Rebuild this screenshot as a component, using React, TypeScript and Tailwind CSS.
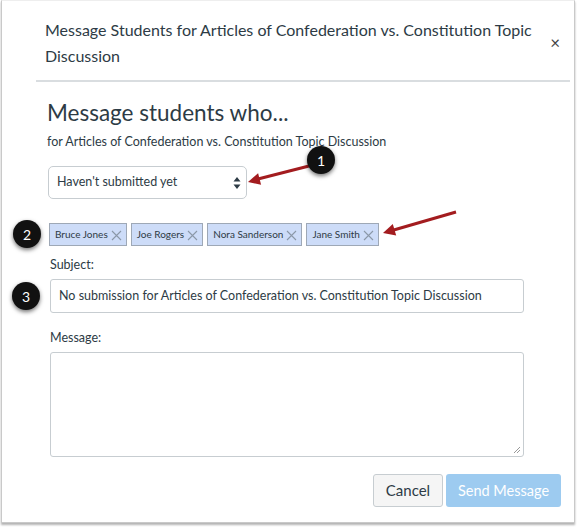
import { ReactNode } from 'react';

const recipients = ['Bruce Jones', 'Joe Rogers', 'Nora Sanderson', 'Jane Smith'];

function Callout({ n, className }: { n: number; className: string }) {
  return (
    <div
      className={`absolute flex h-[28px] w-[28px] items-center justify-center rounded-full bg-[#111] text-[14px] text-white shadow-[0_2px_4px_rgba(0,0,0,0.55)] ${className}`}>
      {n}
    </div>
  );
}

function Label({ children }: { children: ReactNode }) {
  return <div className="ml-[3px] text-[12.5px] leading-[18px] text-[#2d3b45]">{children}</div>;
}

function RecipientTag({ name }: { name: string }) {
  return (
    <div className="flex h-[23px] items-center gap-[3px] border border-[#9ea8b6] bg-[#cddcf8] pl-[5px] pr-[4px] text-[10px] text-[#2d3b45]">
      <span>{name}</span>
      <svg width="11" height="11" viewBox="0 0 11 11" className="mt-[1px]">
        <path d="M1 1 L10 10 M10 1 L1 10" stroke="#8b98a8" strokeWidth="1.1" fill="none" />
      </svg>
    </div>
  );
}

export default function App() {
  return (
    <div className="relative h-[527px] w-[577px] bg-white font-['Lato','Open_Sans',sans-serif]">
      <div className="ml-[1px] h-[523px] w-[574px] border-x border-b border-t border-[#c9c9c9] border-t-[#eeeeee] bg-white shadow-[0_2px_2px_rgba(0,0,0,0.3)]">
        {/* dialog header */}
        <div className="ml-[34px] mr-[4px] flex items-center border-b-2 border-[#d9dde0] pb-[11px] pt-[16px]">
          <h1 className="w-[500px] pl-[9px] text-[16px] leading-[26px] text-[#2d3b45]">
            Message Students for Articles of Confederation vs. Constitution Topic Discussion
          </h1>
          <span className="ml-auto mr-[10px] mt-[-2px] text-[17px] leading-none text-[#444]">×</span>
        </div>

        {/* dialog body */}
        <div className="w-[559px] pl-[45px]">
          <h2 className="mt-[16px] text-[22.5px] leading-[30px] text-[#2d3b45]">Message students who...</h2>
          <p className="mt-[5px] text-[12.5px] leading-[18px] text-[#2d3b45]">
            for Articles of Confederation vs. Constitution Topic Discussion
          </p>

          <div className="ml-[1px] mt-[15px] flex h-[33px] w-[199px] items-center justify-between rounded-[5px] border border-[#c7cdd1] pl-[8px] pr-[5px] text-[12.5px] text-[#2d3b45]">
            <span>Haven't submitted yet</span>
            <svg width="8" height="14" viewBox="0 0 8 14">
              <path d="M4 1 L7.5 5.5 L0.5 5.5 Z M4 13 L7.5 8.5 L0.5 8.5 Z" fill="#2d3b45" />
            </svg>
          </div>

          <div className="ml-[2px] mt-[24px] flex gap-[4px]">
            {recipients.map((name) => (
              <RecipientTag key={name} name={name} />
            ))}
          </div>

          <div className="mt-[10px]">
            <Label>Subject:</Label>
          </div>
          <div className="ml-[3px] mt-[5px] flex h-[34px] w-[474px] items-center rounded-[3px] border border-[#c7cdd1] px-[8px] text-[12.5px] text-[#2d3b45]">
            No submission for Articles of Confederation vs. Constitution Topic Discussion
          </div>

          <div className="mt-[16px]">
            <Label>Message:</Label>
          </div>
          <div className="relative ml-[3px] mt-[5px] h-[105px] w-[474px] rounded-[3px] border border-[#c7cdd1]">
            <svg width="8" height="8" viewBox="0 0 8 8" className="absolute bottom-[2px] right-[2px]">
              <path d="M7 1 L1 7 M7 4 L4 7" stroke="#999" strokeWidth="1" />
            </svg>
          </div>

          <div className="mt-[17px] flex justify-end gap-[3px]">
            <button className="h-[33px] w-[70px] rounded-[3px] border border-[#c7cdd1] bg-[#f5f5f5] text-[15px] text-[#2d3b45]">
              Cancel
            </button>
            <button className="h-[33px] w-[115px] rounded-[3px] bg-[#9dcbf0] text-[14.5px] text-white">
              Send Message
            </button>
          </div>
        </div>
      </div>

      {/* numbered callouts and arrows */}
      <svg className="pointer-events-none absolute left-0 top-0" width="577" height="527">
        <line x1="309" y1="166" x2="256" y2="179.5" stroke="#a31c1f" strokeWidth="3" />
        <polygon points="248,182 261.1,184.8 258.1,173.2" fill="#a31c1f" />
        <line x1="456" y1="212" x2="392" y2="230.5" stroke="#a31c1f" strokeWidth="3" />
        <polygon points="383,233 396.2,235.5 392.8,223.9" fill="#a31c1f" />
      </svg>
      <Callout n={1} className="left-[307px] top-[146px]" />
      <Callout n={2} className="left-[13px] top-[220px]" />
      <Callout n={3} className="left-[12px] top-[282px]" />
    </div>
  );
}
